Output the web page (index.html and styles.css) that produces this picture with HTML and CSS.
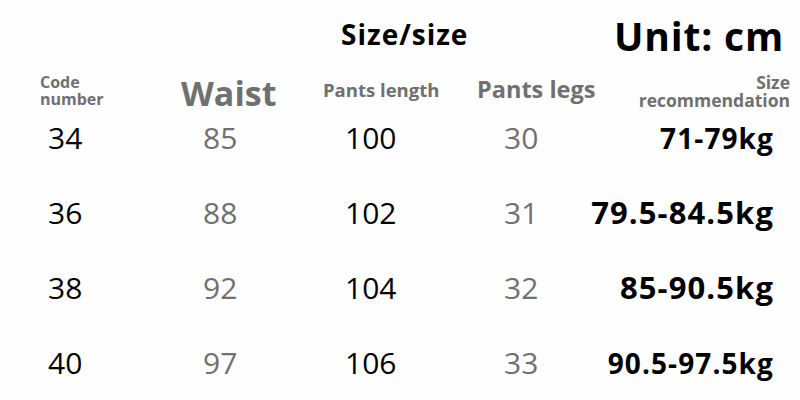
FILE: index.html
```html
<!DOCTYPE html>
<html>
<head>
<meta charset="utf-8">
<link rel="stylesheet" href="styles.css">
</head>
<body>
<div class="page">
  <div class="titles">
    <div class="title">Size/size</div>
    <div class="unit">Unit: cm</div>
  </div>
  <div class="table">
    <div class="h h-code">Code<br>number</div>
    <div class="h h-waist">Waist</div>
    <div class="h h-len">Pants length</div>
    <div class="h h-legs">Pants legs</div>
    <div class="h h-rec">Size<br>recommendation</div>

    <div class="c c-code">34</div><div class="c c-waist">85</div><div class="c c-len">100</div><div class="c c-legs">30</div><div class="c c-kg kg-s">71-79kg</div>
    <div class="c c-code">36</div><div class="c c-waist">88</div><div class="c c-len">102</div><div class="c c-legs">31</div><div class="c c-kg kg-l">79.5-84.5kg</div>
    <div class="c c-code">38</div><div class="c c-waist">92</div><div class="c c-len">104</div><div class="c c-legs">32</div><div class="c c-kg kg-l">85-90.5kg</div>
    <div class="c c-code">40</div><div class="c c-waist">97</div><div class="c c-len">106</div><div class="c c-legs">33</div><div class="c c-kg kg-s">90.5-97.5kg</div>
  </div>
</div>
</body>
</html>
```
FILE: styles.css
```css
html, body {
  margin: 0;
  padding: 0;
  background: #fefefe;
}
body {
  width: 800px;
  height: 400px;
  overflow: hidden;
  font-family: "Open Sans", "Noto Sans", sans-serif;
  color: #000;
}
.page {
  padding-left: 40px;
  padding-right: 10px;
}
.titles {
  display: flex;
  align-items: flex-start;
  height: 56px;
  padding-left: 301px;
}
.title {
  font-weight: 700;
  font-size: 28px;
  line-height: 1;
  letter-spacing: 1px;
  margin-top: 20px;
}
.unit {
  font-weight: 700;
  font-size: 39px;
  line-height: 1;
  letter-spacing: 0.8px;
  margin-left: auto;
  margin-top: 16px;
  padding-right: 6px;
}
.table {
  display: grid;
  grid-template-columns: 140px 140px 150px 110px 210px;
  grid-template-rows: 56px repeat(4, 75px);
  align-items: baseline;
}
.h {
  color: #707070;
  font-weight: 700;
  align-self: end;
  line-height: 1;
  white-space: nowrap;
}
.h-code {
  font-size: 16px;
  line-height: 17px;
  margin-bottom: 4px;
}
.h-waist {
  font-size: 34px;
  padding-left: 1px;
  margin-bottom: 2px;
}
.h-len {
  font-size: 18.5px;
  padding-left: 3px;
  margin-bottom: 13px;
}
.h-legs {
  font-size: 23.5px;
  padding-left: 7px;
  margin-bottom: 11px;
}
.h-rec {
  font-size: 17.5px;
  line-height: 17.5px;
  text-align: right;
  margin-bottom: 3px;
}
.c {
  font-size: 30px;
  line-height: 1;
  padding-top: 11px;
  white-space: nowrap;
}
.c-code { padding-left: 8px; }
.c-waist { padding-left: 23px; color: #707070; }
.c-len { padding-left: 25px; }
.c-legs { padding-left: 34px; color: #707070; }
.c-kg {
  font-weight: 700;
  text-align: right;
  letter-spacing: 1.1px;
  padding-right: 16px;
  padding-top: 0;
}
.kg-s { font-size: 28px; }
.kg-l { font-size: 31px; }
```
